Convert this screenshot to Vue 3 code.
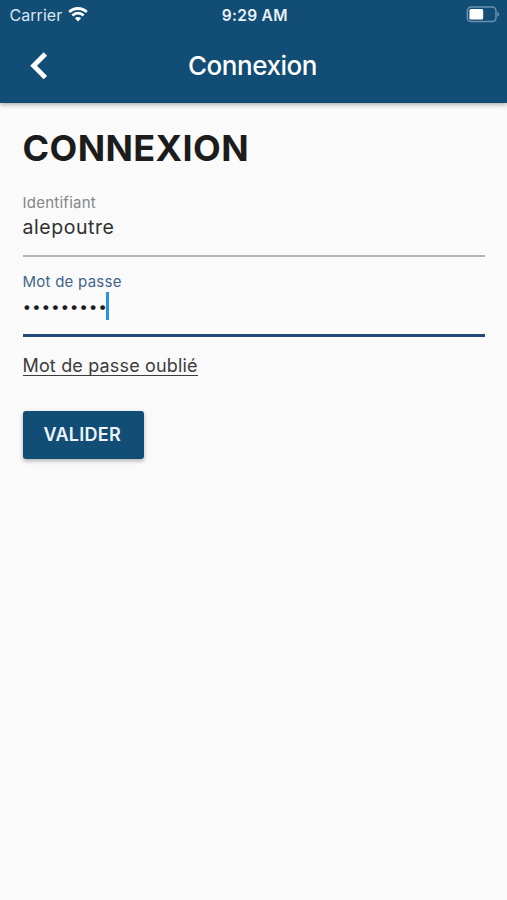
<template>
  <div class="screen">
    <header class="header">
      <div class="status-bar">
        <div class="carrier">
          <span class="carrier-name">Carrier</span>
          <svg class="wifi" viewBox="0 0 20 15" width="20" height="15">
            <path d="M1.2 5.1 A12.6 12.6 0 0 1 18.8 5.1" />
            <path d="M4.4 8.5 A8 8 0 0 1 15.6 8.5" />
            <path class="wifi-dot" d="M6.9 11.2 A4.4 4.4 0 0 1 13.1 11.2 L10 14.4 Z" />
          </svg>
        </div>
        <span class="time">9:29 AM</span>
        <svg class="battery" viewBox="0 0 34 17" width="34" height="17">
          <rect class="battery-case" x="1.4" y="1" width="28.6" height="14.6" rx="3.8" />
          <rect class="battery-level" x="3.4" y="3" width="13.8" height="10.6" rx="1.6" />
          <path class="battery-tip" d="M31.4 5.8 Q33.2 6.6 33.2 8.3 Q33.2 10 31.4 10.8 Z" />
        </svg>
      </div>
      <div class="nav-bar">
        <button class="back" aria-label="Retour">
          <svg viewBox="0 0 18 28" width="18" height="28">
            <path d="M15.4 2 L3.6 13.8 L15.4 25.6" />
          </svg>
        </button>
        <span class="nav-title">Connexion</span>
      </div>
    </header>

    <main class="content">
      <h1 class="title">CONNEXION</h1>

      <label class="field">
        <span class="label">Identifiant</span>
        <input v-model="login" class="value" type="text" />
      </label>

      <div class="field focused">
        <span class="label">Mot de passe</span>
        <div class="value password">
          <span class="dots">{{ maskedPassword }}</span>
          <span class="caret"></span>
        </div>
      </div>

      <a class="forgot">Mot de passe oublié</a>
      <button class="submit">VALIDER</button>
    </main>
  </div>
</template>

<script setup>
import { ref, computed } from "vue";

const login = ref("alepoutre");
const passwordLength = ref(9);
const maskedPassword = computed(() => "•".repeat(passwordLength.value));
</script>

<style>
body {
  background-color: #fafafa;
}
</style>

<style scoped>
.screen {
  min-height: 900px;
  background-color: #fafafa;
  font-family: Inter, "Liberation Sans", sans-serif;
  color: #1c1c1c;
}

.header {
  height: 103px;
  background-color: #124d75;
  color: #fff;
  box-shadow: 0 1px 5px rgba(0, 0, 0, 0.4);
}

.status-bar {
  display: grid;
  grid-template-columns: 1fr auto 1fr;
  align-items: center;
  height: 29px;
  padding: 0 7px 0 9.5px;
}
.carrier {
  display: flex;
  align-items: center;
  gap: 6px;
}
.carrier-name {
  font-size: 16px;
  letter-spacing: 0.05px;
  color: #d9e5ee;
}
.wifi {
  fill: none;
  stroke: #fff;
  stroke-width: 2.8;
}
.wifi .wifi-dot {
  fill: #fff;
  stroke: none;
}
.time {
  padding-top: 1px;
  font-size: 15.5px;
  font-weight: 600;
  letter-spacing: 0.3px;
  color: #e9f1f7;
}
.battery {
  justify-self: end;
}
.battery-case {
  fill: none;
  stroke: #6b91b0;
  stroke-width: 1.5;
}
.battery-level {
  fill: #fff;
}
.battery-tip {
  fill: #6b91b0;
}

.nav-bar {
  display: grid;
  grid-template-columns: 70px 1fr 70px;
  align-items: center;
  height: 73px;
}
.back {
  justify-self: start;
  display: flex;
  margin-left: 30px;
  padding: 0;
  border: none;
  background: none;
}
.back path {
  fill: none;
  stroke: #fff;
  stroke-width: 4.8;
}
.nav-title {
  padding-right: 2px;
  text-align: center;
  font-size: 26px;
  font-weight: 500;
  letter-spacing: -0.45px;
}

.content {
  display: flex;
  flex-direction: column;
  align-items: flex-start;
  padding: 23px 22px 0 22.5px;
}
.title {
  margin: 0 0 23px;
  font-size: 36px;
  font-weight: 700;
  line-height: 44px;
  letter-spacing: 0.4px;
}

.field {
  display: flex;
  flex-direction: column;
  width: 100%;
  height: 64px;
  box-sizing: border-box;
  border-bottom: 2px solid #b3b3b3;
}
.field.focused {
  height: 65px;
  margin-top: 15px;
  border-bottom: 3px solid #25487a;
}
.label {
  font-size: 15px;
  line-height: 20px;
  letter-spacing: 0.25px;
  color: #858585;
}
.focused .label {
  color: #41658a;
}
.value {
  width: 100%;
  height: 28px;
  padding: 0;
  border: none;
  outline: none;
  background: none;
  font-family: inherit;
  font-size: 19.5px;
  letter-spacing: 0.55px;
  color: #303030;
}
.password {
  display: flex;
  align-items: center;
}
.dots {
  font-size: 15.5px;
  letter-spacing: 0.75px;
  color: #1c1c1c;
}
.caret {
  width: 3px;
  height: 28px;
  margin-left: -1.5px;
  background-color: #2b8fe0;
}

.forgot {
  margin-top: 19px;
  font-size: 18px;
  line-height: 19px;
  letter-spacing: 0.16px;
  color: #3c3c3c;
  border-bottom: 1px solid #3c3c3c;
}

.submit {
  width: 121.5px;
  height: 48px;
  margin-top: 35px;
  padding: 0 2px 2px 0;
  border: none;
  border-radius: 3px;
  background-color: #124d75;
  color: #edf4fa;
  font-family: inherit;
  font-size: 18px;
  font-weight: 600;
  letter-spacing: 0.3px;
  box-shadow: 0 2px 4px rgba(0, 0, 0, 0.3);
}
</style>
